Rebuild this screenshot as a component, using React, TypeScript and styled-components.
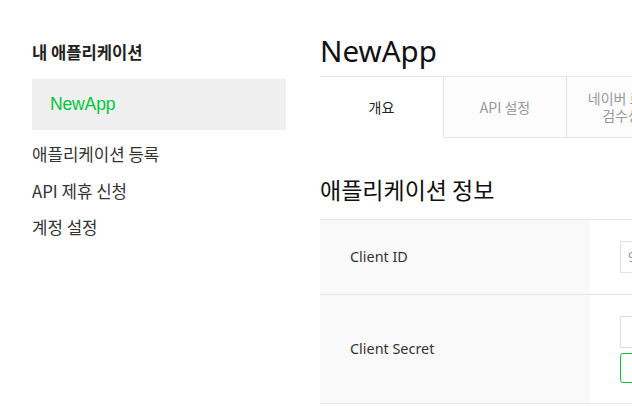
import React from "react";
import styled, { createGlobalStyle } from "styled-components";

const Global = createGlobalStyle`
  html, body { margin: 0; padding: 0; background: #fff; overflow: hidden; }
  body { font-family: "Noto Sans", "Noto Sans CJK KR", sans-serif; color: #222; }
  * { box-sizing: border-box; }
`;

const Page = styled.div`
  display: flex;
  width: 1100px;
  padding-left: 32px;
  gap: 34px;
`;

const Sidebar = styled.aside`
  width: 254px;
  flex: none;
  display: flex;
  flex-direction: column;
`;

const SideTitle = styled.h2`
  margin: 0;
  padding-top: 40px;
  height: 79px;
  font-size: 16.6px;
  font-weight: 700;
  line-height: 24px;
  color: #222;
  font-family: "Noto Sans CJK KR", sans-serif;
`;

const ActiveItem = styled.div`
  height: 51px;
  background: #efefef;
  display: flex;
  align-items: center;
  padding-left: 18px;
  font-size: 17.6px;
  color: #00c73c;
  font-family: "Liberation Sans", "Noto Sans CJK KR", sans-serif;
  letter-spacing: -0.2px;
`;

const MenuList = styled.ul`
  list-style: none;
  margin: 0;
  padding: 6px 0 0;
`;

const MenuItem = styled.li`
  height: 36.5px;
  line-height: 36px;
  font-size: 16.8px;
  color: #333;
  font-family: "Noto Sans CJK KR", sans-serif;
`;

const Main = styled.main`
  width: 760px;
  flex: none;
`;

const Title = styled.h1`
  margin: 0;
  padding-top: 32px;
  height: 76px;
  font-size: 29.5px;
  font-weight: 400;
  line-height: 38px;
  color: #111;
  font-family: "Noto Sans", sans-serif;
`;

const Tabs = styled.div`
  display: flex;
  border-top: 1px solid #e5e5e5;
`;

const Tab = styled.div<{ $active?: boolean }>`
  width: 123px;
  height: 61px;
  display: flex;
  align-items: center;
  justify-content: center;
  text-align: center;
  font-size: 14px;
  line-height: 17px;
  font-family: "Noto Sans CJK KR", sans-serif;
  color: ${(p) => (p.$active ? "#222" : "#999")};
  background: ${(p) => (p.$active ? "#fff" : "#fcfcfc")};
  border-left: ${(p) => (p.$active ? "none" : "1px solid #e5e5e5")};
  border-bottom: ${(p) => (p.$active ? "1px solid transparent" : "1px solid #e5e5e5")};
`;

const SectionTitle = styled.h3`
  margin: 0;
  padding-top: 36px;
  height: 82px;
  font-size: 23px;
  font-weight: 400;
  line-height: 30px;
  color: #111;
  font-family: "Noto Sans CJK KR", sans-serif;
`;

const Table = styled.div`
  border-top: 1px solid #e5e5e5;
  margin-top: -1px;
`;

const Row = styled.div<{ $h: number }>`
  display: flex;
  height: ${(p) => p.$h}px;
  border-bottom: 1px solid #e5e5e5;
`;

const Label = styled.div`
  width: 270px;
  flex: none;
  background: #f9f9f9;
  display: flex;
  align-items: center;
  padding-left: 30px;
  padding-bottom: 2px;
  font-size: 14.4px;
  color: #333;
  font-family: "Noto Sans", sans-serif;
`;

const Value = styled.div`
  flex: 1;
  display: flex;
  flex-direction: column;
  justify-content: center;
  padding-left: 30px;
  gap: 5px;
`;

const Input = styled.div`
  width: 300px;
  height: 32px;
  border: 1px solid #e1e1e1;
  font-size: 14px;
  color: #999;
  line-height: 30px;
  padding-left: 7px;
  font-family: "Noto Sans", sans-serif;
`;

const GreenButton = styled.div`
  width: 120px;
  height: 30px;
  border: 1px solid #19c33b;
  border-radius: 3px;
`;

export default function App() {
  return (
    <>
      <Global />
      <Page>
        <Sidebar>
          <SideTitle>내 애플리케이션</SideTitle>
          <ActiveItem>NewApp</ActiveItem>
          <MenuList>
            <MenuItem>애플리케이션 등록</MenuItem>
            <MenuItem>API 제휴 신청</MenuItem>
            <MenuItem>계정 설정</MenuItem>
          </MenuList>
        </Sidebar>
        <Main>
          <Title>NewApp</Title>
          <Tabs>
            <Tab $active>개요</Tab>
            <Tab>API 설정</Tab>
            <Tab>
              네이버 로그인
              <br />
              검수상태
            </Tab>
          </Tabs>
          <SectionTitle>애플리케이션 정보</SectionTitle>
          <Table>
            <Row $h={75}>
              <Label>Client ID</Label>
              <Value>
                <Input>9</Input>
              </Value>
            </Row>
            <Row $h={109}>
              <Label>Client Secret</Label>
              <Value>
                <Input />
                <GreenButton />
              </Value>
            </Row>
          </Table>
        </Main>
      </Page>
    </>
  );
}
